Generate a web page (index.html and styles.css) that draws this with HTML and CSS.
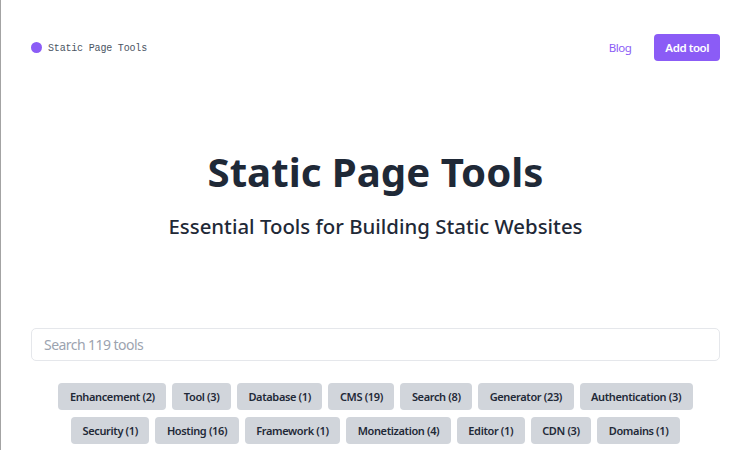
FILE: index.html
```html
<!DOCTYPE html>
<html lang="en">
<head>
    <meta charset="UTF-8">
    <title>Static Page Tools</title>
    <link rel="stylesheet" href="styles.css">
</head>
<body>
    <div class="page">
        <header class="top">
            <a class="brand"><span class="dot"></span><span class="brand-name">Static Page Tools</span></a>
            <nav class="nav">
                <a class="blog">Blog</a>
                <a class="add">Add tool</a>
            </nav>
        </header>
        <section class="hero">
            <h1>Static Page Tools</h1>
            <h2>Essential Tools for Building Static Websites</h2>
        </section>
        <input class="search" type="text" placeholder="Search 119 tools">
        <div class="tags">
            <a class="tag">Enhancement (2)</a>
            <a class="tag">Tool (3)</a>
            <a class="tag">Database (1)</a>
            <a class="tag">CMS (19)</a>
            <a class="tag">Search (8)</a>
            <a class="tag">Generator (23)</a>
            <a class="tag">Authentication (3)</a>
            <a class="tag">Security (1)</a>
            <a class="tag">Hosting (16)</a>
            <a class="tag">Framework (1)</a>
            <a class="tag">Monetization (4)</a>
            <a class="tag">Editor (1)</a>
            <a class="tag">CDN (3)</a>
            <a class="tag">Domains (1)</a>
        </div>
    </div>
</body>
</html>
```

FILE: styles.css
```css
* { box-sizing: border-box; }
html, body { height: 100%; }
body { margin: 0; background: #fff; border-left: 1px solid #a3a3a3; overflow: hidden; font-family: "Noto Sans", sans-serif; color: #1f2937; }
.page { padding: 34px 30px 0; }
.top { display: flex; justify-content: space-between; align-items: center; height: 27px; }
.brand { display: flex; align-items: center; gap: 6px; font-family: "Liberation Mono", monospace; font-size: 10px; line-height: 13px; letter-spacing: -0.18px; color: #4b5563; }
.brand-name { padding-top: 1px; }
.dot { width: 11px; height: 11px; border-radius: 50%; background: #8b5cf6; }
.nav { display: flex; align-items: center; gap: 23px; font-size: 11.5px; letter-spacing: -0.45px; }
.blog { color: #8b5cf6; }
.add { background: #8b5cf6; color: #fff; font-weight: 600; height: 27px; line-height: 27px; padding: 0 11px; border-radius: 4px; }
.hero { text-align: center; padding-top: 86px; height: 267px; }
h1 { margin: 0; font-size: 40.2px; line-height: 50px; font-weight: 700; color: #1f2937; }
h2 { margin: 15px 0 0; font-size: 20.4px; line-height: 28px; font-weight: 500; letter-spacing: 0; color: #1f2937; }
.search { display: block; width: 100%; height: 33px; padding: 0 12px; border: 1px solid #e5e7eb; border-radius: 5px; font: 14px "Noto Sans", sans-serif; letter-spacing: -0.55px; outline: none; }
.search::placeholder { color: #9ca3af; }
.tags { display: flex; flex-wrap: wrap; justify-content: center; gap: 7px 6px; margin-top: 22px; }
.tag { background: #d1d5db; height: 27px; line-height: 27px; padding: 0 11.5px; border-radius: 4px; font-size: 11px; font-weight: 600; letter-spacing: -0.36px; color: #1f2937; }
```
